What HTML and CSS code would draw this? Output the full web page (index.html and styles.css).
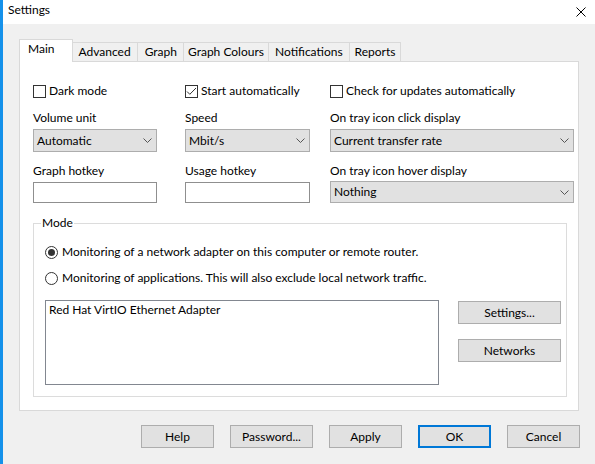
FILE: index.html
```html
<!DOCTYPE html>
<html lang="en">
<head>
    <meta charset="UTF-8">
    <title>Settings</title>
    <link rel="stylesheet" href="styles.css">
</head>
<body>
<div class="window">
    <div class="titlebar">
        <span class="title">Settings</span>
        <svg class="close" width="10" height="10" viewBox="0 0 10 10">
            <path d="M0.5 0.5 L9.5 9.5 M9.5 0.5 L0.5 9.5" stroke="#000" stroke-width="1" fill="none"/>
        </svg>
    </div>

    <div class="tabs">
        <div class="tab active">Main</div>
        <div class="tab">Advanced</div>
        <div class="tab graph">Graph</div>
        <div class="tab colours">Graph Colours</div>
        <div class="tab">Notifications</div>
        <div class="tab reports">Reports</div>
    </div>

    <div class="panel">
        <div class="options">
            <label class="check">
                <svg width="13" height="13" viewBox="0 0 13 13"><rect x="0.5" y="0.5" width="12" height="12" fill="#fff" stroke="#333"/></svg>
                Dark mode
            </label>
            <label class="check">
                <svg width="13" height="13" viewBox="0 0 13 13"><rect x="0.5" y="0.5" width="12" height="12" fill="#fff" stroke="#333"/><polyline points="2,6.5 4.8,9.3 11,3" fill="none" stroke="#333" stroke-width="1"/></svg>
                Start automatically
            </label>
            <label class="check">
                <svg width="13" height="13" viewBox="0 0 13 13"><rect x="0.5" y="0.5" width="12" height="12" fill="#fff" stroke="#333"/></svg>
                Check for updates automatically
            </label>

            <div class="field">
                <div class="label">Volume unit</div>
                <div class="combo"><span>Automatic</span><svg width="9" height="5" viewBox="0 0 9 5"><polyline points="0.5,0.5 4.5,4.5 8.5,0.5" fill="none" stroke="#555"/></svg></div>
            </div>
            <div class="field mid">
                <div class="label">Speed</div>
                <div class="combo"><span>Mbit/s</span><svg width="9" height="5" viewBox="0 0 9 5"><polyline points="0.5,0.5 4.5,4.5 8.5,0.5" fill="none" stroke="#555"/></svg></div>
            </div>
            <div class="field wide">
                <div class="label">On tray icon click display</div>
                <div class="combo"><span>Current transfer rate</span><svg width="9" height="5" viewBox="0 0 9 5"><polyline points="0.5,0.5 4.5,4.5 8.5,0.5" fill="none" stroke="#555"/></svg></div>
            </div>

            <div class="field">
                <div class="label">Graph hotkey</div>
                <div class="hotkey"></div>
            </div>
            <div class="field mid">
                <div class="label">Usage hotkey</div>
                <div class="hotkey"></div>
            </div>
            <div class="field wide">
                <div class="label">On tray icon hover display</div>
                <div class="combo short"><span>Nothing</span><svg width="9" height="5" viewBox="0 0 9 5"><polyline points="0.5,0.5 4.5,4.5 8.5,0.5" fill="none" stroke="#555"/></svg></div>
            </div>
        </div>

        <fieldset class="mode">
            <legend>Mode</legend>
            <label class="radio">
                <svg width="13" height="13" viewBox="0 0 13 13"><circle cx="6.5" cy="6.5" r="6" fill="#fff" stroke="#333"/><circle cx="6.5" cy="6.5" r="3.5" fill="#333"/></svg>
                Monitoring of a network adapter on this computer or remote router.
            </label>
            <label class="radio">
                <svg width="13" height="13" viewBox="0 0 13 13"><circle cx="6.5" cy="6.5" r="6" fill="#fff" stroke="#333"/></svg>
                Monitoring of applications. This will also exclude local network traffic.
            </label>

            <div class="adapters">
                <div class="listbox">
                    <div>Red Hat VirtIO Ethernet Adapter</div>
                </div>
                <div class="side">
                    <button class="btn wide-btn">Settings...</button>
                    <button class="btn wide-btn">Networks</button>
                </div>
            </div>
        </fieldset>
    </div>

    <div class="footer">
        <button class="btn">Help</button>
        <button class="btn pw">Password...</button>
        <button class="btn">Apply</button>
        <button class="btn default">OK</button>
        <button class="btn">Cancel</button>
    </div>
</div>
</body>
</html>
```

FILE: styles.css
```css
body {
    margin: 0;
    font-family: Lato, "Liberation Sans", sans-serif;
    font-size: 12px;
    color: #000;
    background-color: #f0f0f0;
}

.window {
    height: 464px;
    box-sizing: border-box;
    border-left: 3px solid #1591ea;
}

.titlebar {
    height: 24px;
    box-sizing: border-box;
    padding: 2px 9px 0 5px;
    display: flex;
    justify-content: space-between;
    align-items: flex-start;
    line-height: 16px;
    background-color: #fff;
}

.close {
    margin-top: 5px;
}

.tabs {
    display: flex;
    align-items: flex-end;
    margin: 15px 0 -1px 16px;
    position: relative;
    z-index: 1;
}

.tab {
    height: 19px;
    box-sizing: border-box;
    margin-bottom: 1px;
    margin-left: -1px;
    padding: 0 6px;
    border: 1px solid #d9d9d9;
    border-bottom: none;
    line-height: 18px;
    background-color: #f0f0f0;
}

.tab:first-child {
    margin-left: 0;
}

.tab.graph {
    padding: 0 6px 0 7px;
}

.tab.colours {
    padding: 0 4px 0 4px;
}

.tab.reports {
    padding: 0 5px;
}

.tab.active {
    height: 23px;
    margin-bottom: 0;
    padding: 1px 17px 0 8px;
    line-height: 16px;
    background-color: #fff;
}

.panel {
    margin: 0 16px;
    height: 350px;
    box-sizing: border-box;
    padding: 21px 0 0 13px;
    border: 1px solid #d9d9d9;
    background-color: #fff;
}

.options {
    display: grid;
    grid-template-columns: 152px 145px 244px;
    row-gap: 11px;
    line-height: 16px;
}

.check,
.radio {
    display: flex;
    align-items: center;
    gap: 3px;
}

.field {
    width: 124px;
}

.field.mid {
    width: 125px;
}

.field.wide {
    width: auto;
}

.combo {
    margin-top: 3px;
    height: 23px;
    box-sizing: border-box;
    padding: 0 4px 0 3px;
    display: flex;
    align-items: center;
    justify-content: space-between;
    border: 1px solid #adadad;
    background-color: #e1e1e1;
}

.combo.short {
    margin-top: 2px;
    height: 22px;
}

.hotkey {
    margin-top: 3px;
    height: 21px;
    box-sizing: border-box;
    border: 1px solid #8f8f8f;
    background-color: #fff;
}

.mode {
    margin: 12px 0 0;
    width: 534px;
    min-width: 0;
    box-sizing: border-box;
    padding: 13px 5px 11px 11px;
    border: 1px solid #dcdcdc;
}

.mode legend {
    padding: 0 1px;
    margin-left: -4px;
    line-height: 16px;
}

.radio {
    gap: 4px;
    line-height: 16px;
}

.radio + .radio {
    margin-top: 10px;
}

.adapters {
    display: flex;
    gap: 19px;
    margin-top: 14px;
}

.listbox {
    width: 394px;
    height: 85px;
    box-sizing: border-box;
    padding: 1px 3px;
    line-height: 16px;
    border: 1px solid #828790;
    background-color: #fff;
}

.side {
    display: flex;
    flex-direction: column;
    gap: 15px;
    padding-top: 1px;
}

.btn {
    width: 73px;
    height: 23px;
    box-sizing: border-box;
    padding: 0;
    font: inherit;
    color: #000;
    border: 1px solid #adadad;
    background-color: #e1e1e1;
}

.btn.wide-btn {
    width: 103px;
}

.btn.pw {
    width: 83px;
}

.btn.default {
    border: 2px solid #0078d7;
}

.footer {
    display: flex;
    justify-content: flex-end;
    gap: 16px;
    margin-top: 14px;
    padding-right: 15px;
}
```
